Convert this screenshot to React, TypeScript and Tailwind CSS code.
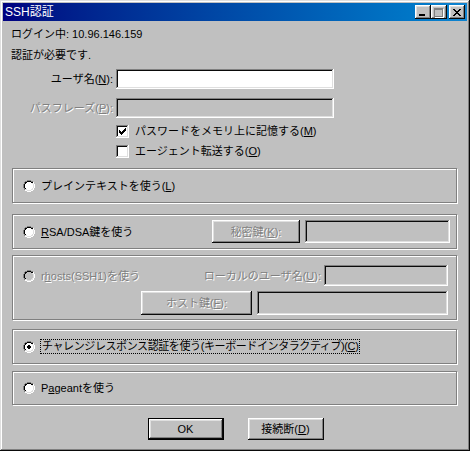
import React from "react";

const raised =
  "shadow-[inset_-1px_-1px_#0a0a0a,inset_1px_1px_#ffffff,inset_-2px_-2px_#808080,inset_2px_2px_#dfdfdf]";
const sunken =
  "shadow-[inset_-1px_-1px_#ffffff,inset_1px_1px_#808080,inset_-2px_-2px_#dfdfdf,inset_2px_2px_#0a0a0a]";
const group =
  "border border-[#808080] shadow-[inset_1px_1px_#ffffff,1px_1px_#ffffff]";
const dim = "text-[#808080] [text-shadow:1px_1px_0_#ffffff]";

const Radio = ({ checked = false, disabled = false }: { checked?: boolean; disabled?: boolean }) => {
  const fill = disabled ? "#c0c0c0" : "#ffffff";
  return (
    <svg width="12" height="12" viewBox="0 0 12 12" className="shrink-0" shapeRendering="crispEdges">
      {/* interior */}
      <rect x="4" y="2" width="4" height="8" fill={fill} />
      <rect x="3" y="3" width="6" height="6" fill={fill} />
      <rect x="2" y="4" width="8" height="4" fill={fill} />
      {/* outer dark gray arc */}
      <rect x="4" y="0" width="4" height="1" fill="#808080" />
      <rect x="2" y="1" width="2" height="1" fill="#808080" />
      <rect x="8" y="1" width="2" height="1" fill="#808080" />
      <rect x="1" y="2" width="1" height="2" fill="#808080" />
      <rect x="0" y="4" width="1" height="4" fill="#808080" />
      <rect x="1" y="8" width="1" height="2" fill="#808080" />
      {/* inner black arc */}
      <rect x="4" y="1" width="4" height="1" fill="#000" />
      <rect x="2" y="2" width="2" height="1" fill="#000" />
      <rect x="8" y="2" width="2" height="1" fill="#000" />
      <rect x="2" y="3" width="1" height="1" fill="#000" />
      <rect x="1" y="4" width="1" height="4" fill="#000" />
      <rect x="2" y="8" width="1" height="1" fill="#000" />
      {/* inner light arc */}
      <rect x="9" y="3" width="1" height="1" fill="#dfdfdf" />
      <rect x="10" y="4" width="1" height="4" fill="#dfdfdf" />
      <rect x="9" y="8" width="1" height="1" fill="#dfdfdf" />
      <rect x="8" y="9" width="2" height="1" fill="#dfdfdf" />
      <rect x="4" y="10" width="4" height="1" fill="#dfdfdf" />
      <rect x="2" y="9" width="2" height="1" fill="#dfdfdf" />
      {/* outer white arc */}
      <rect x="10" y="2" width="1" height="2" fill="#fff" />
      <rect x="11" y="4" width="1" height="4" fill="#fff" />
      <rect x="10" y="8" width="1" height="2" fill="#fff" />
      <rect x="8" y="10" width="2" height="1" fill="#fff" />
      <rect x="4" y="11" width="4" height="1" fill="#fff" />
      <rect x="2" y="10" width="2" height="1" fill="#fff" />
      {checked && (
        <>
          <rect x="5" y="4" width="2" height="4" fill="#000" />
          <rect x="4" y="5" width="4" height="2" fill="#000" />
        </>
      )}
    </svg>
  );
};

const Check = ({ checked = false }: { checked?: boolean }) => (
  <div className={`w-[13px] h-[13px] bg-white shrink-0 ${sunken} flex items-center justify-center`}>
    {checked && (
      <svg width="7" height="7" viewBox="0 0 7 7" shapeRendering="crispEdges">
        <path
          d="M6 0h1v3h-1v1h-1v1h-1v1h-1v1h-1v-1h-1v-1h-1v-3h1v1h1v1h1v-1h1v-1h1z"
          fill="#000"
        />
      </svg>
    )}
  </div>
);

const TitleBtn = ({ children, className = "" }: { children: React.ReactNode; className?: string }) => (
  <div className={`w-[16px] h-[14px] bg-[#c0c0c0] ${raised} flex items-center justify-center ${className}`}>
    {children}
  </div>
);

const Field = ({ w, h, disabled = false }: { w: string; h: string; disabled?: boolean }) => (
  <div className={`${w} ${h} ${disabled ? "bg-[#c0c0c0]" : "bg-white"} ${sunken} shrink-0`} />
);

export default function App() {
  return (
    <div className="w-[470px] h-[451px] bg-[#c0c0c0] p-[3px] flex flex-col text-[11px] leading-[14px] text-black font-['Liberation_Sans','Noto_Sans_CJK_JP',sans-serif] shadow-[inset_-1px_-1px_#0a0a0a,inset_1px_1px_#dfdfdf,inset_-2px_-2px_#808080,inset_2px_2px_#ffffff]">
      {/* title bar */}
      <div className="h-[18px] flex items-center bg-gradient-to-r from-[#000080] to-[#1084d0] pl-[2px] pr-[2px] shrink-0">
        <span className="text-white text-[12px]">SSH認証</span>
        <div className="ml-auto flex items-center">
          <TitleBtn>
            <div className="w-[6px] h-[2px] bg-black mt-[6px] mr-[2px]" />
          </TitleBtn>
          <TitleBtn>
            <div className="w-[9px] h-[9px] border border-t-2 border-[#808080] shadow-[1px_1px_#ffffff] mr-[1px]" />
          </TitleBtn>
          <TitleBtn className="ml-[2px]">
            <svg width="8" height="7" viewBox="0 0 8 7" shapeRendering="crispEdges" className="mr-[1px]">
              <path
                d="M0 0h2v1h1v1h2v-1h1v-1h2v1h-1v1h-1v1h-1v1h1v1h1v1h1v1h-2v-1h-1v-1h-2v1h-1v1h-2v-1h1v-1h1v-1h1v-1h-1v-1h-1v-1h-1z"
                fill="#000"
              />
            </svg>
          </TitleBtn>
        </div>
      </div>

      {/* header lines */}
      <div className="pl-[8px] mt-[6px]">ログイン中: 10.96.146.159</div>
      <div className="pl-[8px] mt-[7px]">認証が必要です.</div>

      {/* user / pass */}
      <div className="flex items-center mt-[7px]">
        <div className="w-[110px] text-right">
          ユーザ名(<u>N</u>):
        </div>
        <div className="ml-[3px]">
          <Field w="w-[218px]" h="h-[20px]" />
        </div>
      </div>
      <div className="flex items-center mt-[9px]">
        <div className={`w-[110px] text-right ${dim}`}>
          パスフレーズ(<u>P</u>):
        </div>
        <div className="ml-[3px]">
          <Field w="w-[218px]" h="h-[20px]" disabled />
        </div>
      </div>
      <div className="flex items-center mt-[6px] pl-[113px] gap-[6px]">
        <Check checked />
        <span>
          パスワードをメモリ上に記憶する(<u>M</u>)
        </span>
      </div>
      <div className="flex items-center mt-[6px] pl-[113px] gap-[6px]">
        <Check />
        <span>
          エージェント転送する(<u>O</u>)
        </span>
      </div>

      {/* plain text */}
      <div className={`ml-[9px] w-[445px] h-[35px] mt-[10px] ${group} flex items-center pl-[10px] gap-[6px]`}>
        <Radio />
        <span>
          プレインテキストを使う(<u>L</u>)
        </span>
      </div>

      {/* RSA/DSA */}
      <div className={`ml-[9px] w-[445px] h-[35px] mt-[11px] ${group} flex items-center pl-[10px] pr-[6px]`}>
        <Radio />
        <span className="ml-[6px]">
          <u>R</u>SA/DSA鍵を使う
        </span>
        <div className={`ml-auto w-[88px] h-[23px] ${raised} flex items-center justify-center ${dim}`}>
          秘密鍵(<u>K</u>):
        </div>
        <div className="ml-[5px]">
          <Field w="w-[145px]" h="h-[23px]" disabled />
        </div>
      </div>

      {/* rhosts */}
      <div className={`ml-[9px] w-[445px] h-[65px] mt-[6px] ${group} flex flex-col pt-[9px] pl-[10px] pr-[8px]`}>
        <div className="flex items-center h-[21px]">
          <Radio disabled />
          <span className={`ml-[6px] ${dim}`}>
            r<u>h</u>osts(SSH1)を使う
          </span>
          <span className={`ml-auto ${dim}`}>
            ローカルのユーザ名(<u>U</u>):
          </span>
          <div className="ml-[3px]">
            <Field w="w-[124px]" h="h-[21px]" disabled />
          </div>
        </div>
        <div className="flex items-center justify-end mt-[5px]">
          <div className={`w-[111px] h-[24px] ${raised} flex items-center justify-center ${dim}`}>
            ホスト鍵(<u>F</u>):
          </div>
          <div className="ml-[5px]">
            <Field w="w-[191px]" h="h-[24px]" disabled />
          </div>
        </div>
      </div>

      {/* challenge response */}
      <div className={`ml-[9px] w-[445px] h-[35px] mt-[9px] ${group} flex items-center pl-[10px] gap-[5px]`}>
        <Radio checked />
        <span className="border border-dotted border-black px-[1px] leading-[13px] tracking-[-0.4px]">
          チャレンジレスポンス認証を使う(キーボードインタラクティブ)(<u>C</u>)
        </span>
      </div>

      {/* pageant */}
      <div className={`ml-[9px] w-[445px] h-[34px] mt-[7px] ${group} flex items-center pl-[10px] gap-[6px]`}>
        <Radio />
        <span>
          P<u>a</u>geantを使う
        </span>
      </div>

      {/* buttons */}
      <div className="flex justify-center gap-[24px] mt-[13px] pl-[1px]">
        <div className="w-[76px] h-[22px] border border-black flex">
          <div className={`flex-1 ${raised} flex items-center justify-center`}>OK</div>
        </div>
        <div className={`w-[76px] h-[22px] ${raised} flex items-center justify-center`}>
          接続断(<u>D</u>)
        </div>
      </div>
    </div>
  );
}
